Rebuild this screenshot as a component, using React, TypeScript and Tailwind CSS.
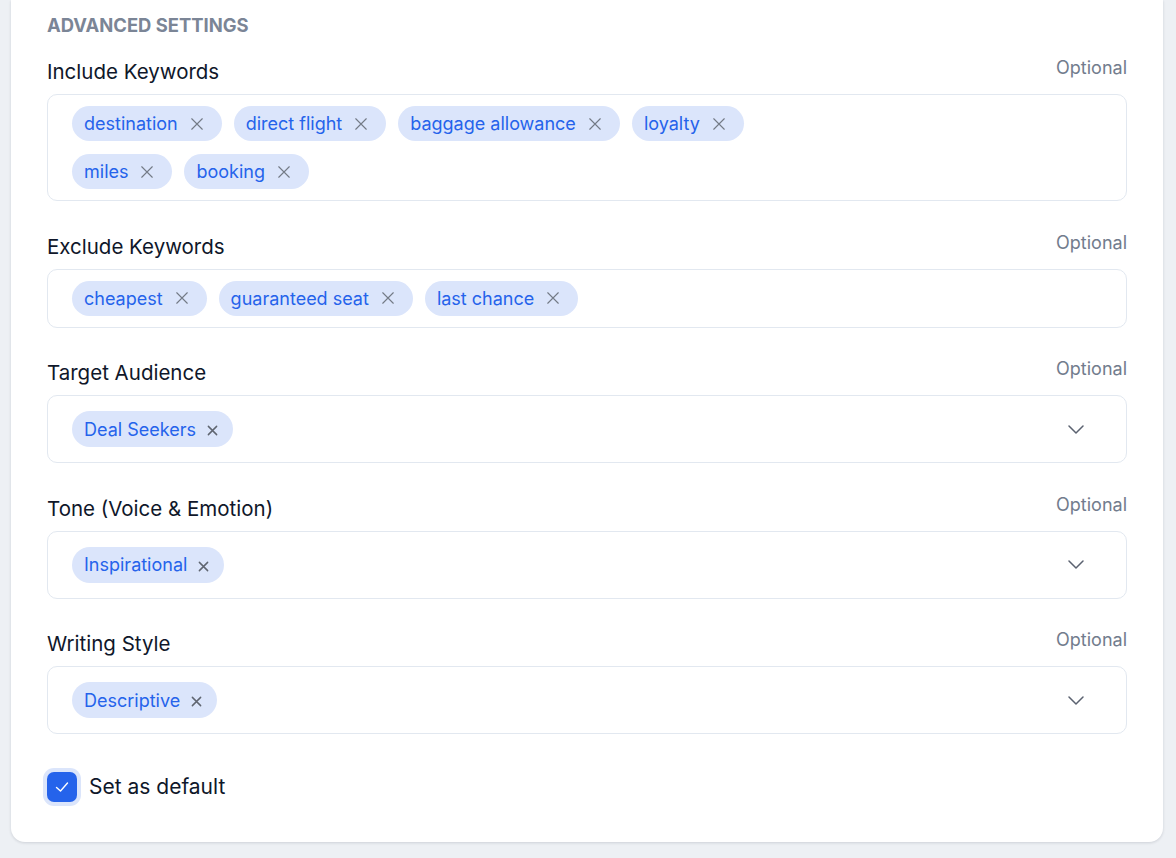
import React from "react";

const INCLUDE = ["destination", "direct flight", "baggage allowance", "loyalty", "miles", "booking"];
const EXCLUDE = ["cheapest", "guaranteed seat", "last chance"];

function ThinX() {
    return (
        <svg viewBox="0 0 16 16" className="w-[14px] h-[14px]" fill="none" stroke="currentColor" strokeWidth={1.3} strokeLinecap="round">
            <path d="M2 2L14 14M14 2L2 14" />
        </svg>
    );
}

function SmallX() {
    return (
        <svg viewBox="0 0 12 12" className="w-[11px] h-[11px]" fill="none" stroke="currentColor" strokeWidth={1.6} strokeLinecap="round">
            <path d="M1.5 1.5L10.5 10.5M10.5 1.5L1.5 10.5" />
        </svg>
    );
}

function KeywordChip({ label }: { label: string }) {
    return (
        <span className="inline-flex items-center h-[35px] pl-3 pr-[18px] gap-3 rounded-full bg-[#dbe5fb] text-[#2563eb] text-[18px]">
            {label}
            <span className="text-[#737a86]"><ThinX /></span>
        </span>
    );
}

function SelectChip({ label }: { label: string }) {
    return (
        <span className="inline-flex items-center h-9 pl-3 pr-[15px] gap-[11px] rounded-full bg-[#dbe5fb] text-[#2563eb] text-[18px]">
            {label}
            <span className="text-[#5f6570] mt-[3px]"><SmallX /></span>
        </span>
    );
}

function FieldLabel({ label }: { label: string }) {
    return (
        <div className="flex items-start justify-between">
            <span className="text-[20.5px] leading-7 text-[#0f172a]">{label}</span>
            <span className="text-[18px] leading-5 text-[#727c8d]">Optional</span>
        </div>
    );
}

function KeywordField({ label, items }: { label: string; items: string[] }) {
    return (
        <div>
            <FieldLabel label={label} />
            <div className="mt-2 border border-[#e2e8f0] rounded-[10px] px-6 py-[11px]">
                <div className="max-w-[720px] flex flex-wrap gap-x-3 gap-y-[13px]">
                    {items.map((k) => (
                        <KeywordChip key={k} label={k} />
                    ))}
                </div>
            </div>
        </div>
    );
}

function SelectField({ label, value }: { label: string; value: string }) {
    return (
        <div>
            <FieldLabel label={label} />
            <div className="mt-2 border border-[#e2e8f0] rounded-[10px] pl-6 pr-[42px] py-[15px] flex items-center justify-between">
                <SelectChip label={value} />
                <svg viewBox="0 0 16 9" className="w-4 h-[9px] text-[#5b6270]" fill="none" stroke="currentColor" strokeWidth={1.5} strokeLinecap="round" strokeLinejoin="round">
                    <path d="M1 1L8 8L15 1" />
                </svg>
            </div>
        </div>
    );
}

export default function App() {
    return (
        <div className="min-h-screen bg-[#edf0f4] font-['Inter',sans-serif]">
            <div className="ml-[11px] w-[1152px] bg-white rounded-b-[14px] shadow-[0_1px_3px_rgba(15,23,42,0.14)] px-9 pt-[13px] pb-10">
                <h2 className="text-[18.4px] leading-6 font-bold text-[#7b8596]">ADVANCED SETTINGS</h2>

                <div className="mt-[21px] flex flex-col gap-[31.5px]">
                    <KeywordField label="Include Keywords" items={INCLUDE} />
                    <KeywordField label="Exclude Keywords" items={EXCLUDE} />
                    <SelectField label="Target Audience" value="Deal Seekers" />
                    <SelectField label="Tone (Voice & Emotion)" value="Inspirational" />
                    <SelectField label="Writing Style" value="Descriptive" />
                </div>

                {/* Default toggle */}
                <label className="mt-[38px] flex items-center gap-3 w-fit">
                    <span className="w-[30px] h-[30px] rounded-[7px] bg-[#2563eb] ring-4 ring-[#dbe5fb] flex items-center justify-center">
                        <svg viewBox="0 0 16 16" className="w-4 h-4" fill="none" stroke="white" strokeWidth={1.4} strokeLinecap="round" strokeLinejoin="round">
                            <path d="M2.5 8.5L6.5 12L13.5 4" />
                        </svg>
                    </span>
                    <span className="text-[21px] leading-7 text-[#0f172a]">Set as default</span>
                </label>
            </div>
        </div>
    );
}
